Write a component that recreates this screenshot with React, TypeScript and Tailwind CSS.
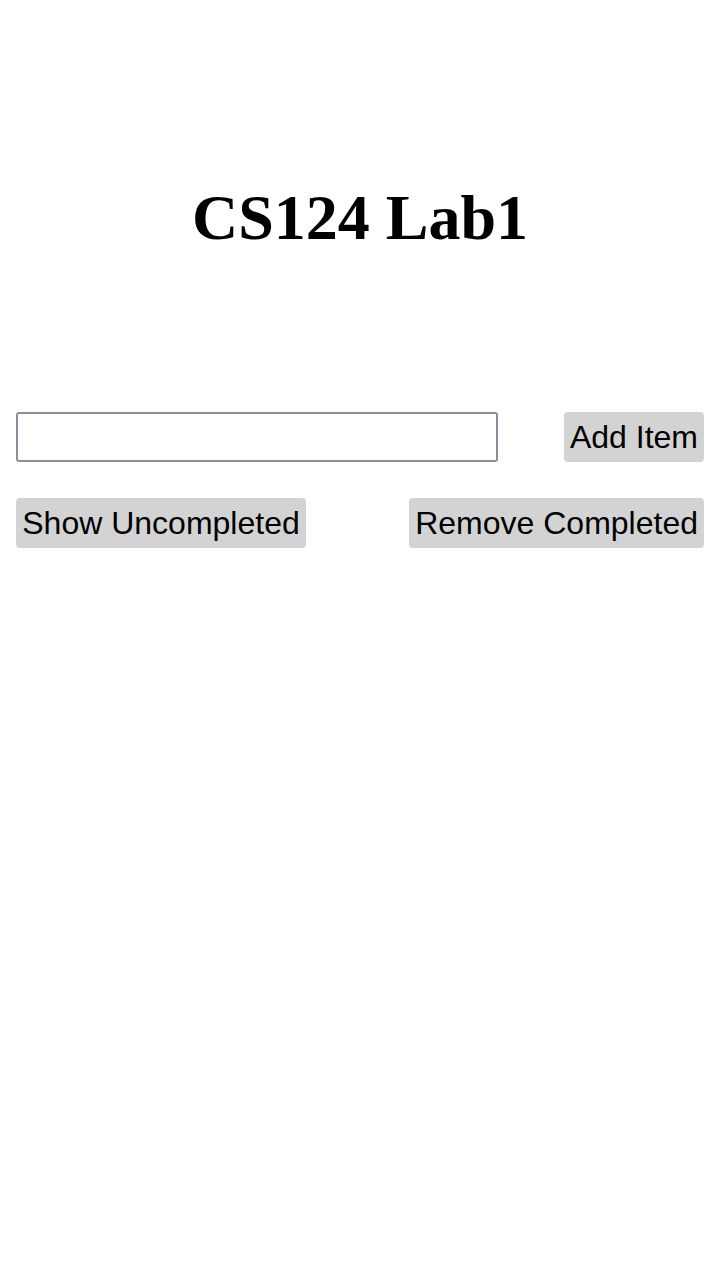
export default function App() {
  return (
    <div className="min-h-[1280px] bg-white px-4 font-['Liberation_Sans',Arial,sans-serif] text-black">
      {/* Title */}
      <h1 className="pt-[178px] pb-[154px] text-center font-['Liberation_Serif','Times_New_Roman',serif] text-[64px] font-bold leading-[80px]">
        CS124 Lab1
      </h1>

      {/* Add item row */}
      <div className="flex items-center justify-between">
        <input
          type="text"
          className="h-[50px] w-[482px] rounded-[3px] border-2 border-[#8f8d9d] bg-white px-2 text-[32px] outline-none"
        />
        <button className="h-[50px] rounded-[4px] bg-[#d3d3d3] px-[6px] text-[32px] leading-none">
          Add Item
        </button>
      </div>

      {/* Filter row */}
      <div className="mt-9 flex items-center justify-between">
        <button className="h-[50px] w-[290px] rounded-[4px] bg-[#d3d3d3] px-[6px] text-[32px] leading-none">
          Show Uncompleted
        </button>
        <button className="h-[50px] rounded-[4px] bg-[#d3d3d3] px-[6px] text-[32px] leading-none">
          Remove Completed
        </button>
      </div>
    </div>
  );
}
